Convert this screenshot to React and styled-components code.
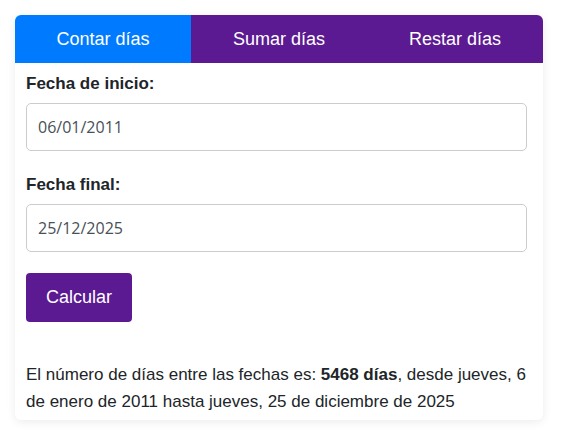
import React, { useState } from "react";
import styled, { createGlobalStyle } from "styled-components";

const GlobalStyle = createGlobalStyle`
  html, body {
    margin: 0;
    padding: 0;
    background: #ffffff;
  }
  body {
    font-family: "Liberation Sans", Arial, sans-serif;
  }
`;

const Page = styled.div`
  padding: 15px 19px 18px 15px;
`;

const Card = styled.div`
  width: 528px;
  background: #fff;
  border-radius: 6px;
  box-shadow: 0 2px 10px rgba(0, 0, 0, 0.08);
  padding-bottom: 5px;
`;

const Tabs = styled.div`
  display: grid;
  grid-template-columns: repeat(3, 1fr);
  height: 48px;
  border-radius: 6px 6px 0 0;
  overflow: hidden;
`;

const Tab = styled.button`
  border: none;
  margin: 0;
  padding: 0;
  background: ${(p) => (p.$active ? "#007bff" : "#5b1a91")};
  color: #fff;
  font-family: "Liberation Sans", Arial, sans-serif;
  font-size: 18px;
  cursor: pointer;
`;

const Body = styled.div`
  padding: 11px 16px 0 11px;
`;

const Group = styled.div`
  display: flex;
  flex-direction: column;
  margin-bottom: ${(p) => p.$gap}px;
`;

const Label = styled.label`
  font-size: 17px;
  font-weight: bold;
  line-height: 20px;
  color: #212529;
  margin-bottom: 9px;
`;

const Input = styled.input`
  box-sizing: border-box;
  height: 48px;
  width: 100%;
  border: 1px solid #cccccc;
  border-radius: 5px;
  padding: 0 11px;
  font-family: "Open Sans", "Noto Sans", sans-serif;
  font-size: 16px;
  color: #495057;
  outline: none;
`;

const Button = styled.button`
  width: 106px;
  height: 49px;
  border: none;
  border-radius: 4px;
  background: #5b1a91;
  color: #fff;
  font-family: "Liberation Sans", Arial, sans-serif;
  font-size: 18px;
  cursor: pointer;
`;

const Result = styled.p`
  margin: 39px 0 0;
  font-size: 17px;
  line-height: 27px;
  color: #212529;
`;

const tabs = ["Contar días", "Sumar días", "Restar días"];

export default function App() {
  const [active, setActive] = useState(0);
  const [start, setStart] = useState("06/01/2011");
  const [end, setEnd] = useState("25/12/2025");

  return (
    <Page>
      <GlobalStyle />
      <Card>
        <Tabs>
          {tabs.map((t, i) => (
            <Tab key={t} $active={i === active} onClick={() => setActive(i)}>
              {t}
            </Tab>
          ))}
        </Tabs>
        <Body>
          <Group $gap={24}>
            <Label>Fecha de inicio:</Label>
            <Input value={start} onChange={(e) => setStart(e.target.value)} />
          </Group>
          <Group $gap={21}>
            <Label>Fecha final:</Label>
            <Input value={end} onChange={(e) => setEnd(e.target.value)} />
          </Group>
          <Button>Calcular</Button>
          <Result>
            El número de días entre las fechas es: <b>5468 días</b>, desde
            jueves, 6 de enero de 2011 hasta jueves, 25 de diciembre de 2025
          </Result>
        </Body>
      </Card>
    </Page>
  );
}
